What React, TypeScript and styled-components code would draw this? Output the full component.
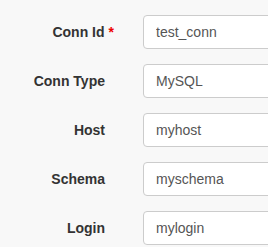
import styled, { createGlobalStyle } from "styled-components";

const GlobalStyle = createGlobalStyle`
  html, body {
    margin: 0;
    padding: 0;
    background: #f8f8f8;
    overflow: hidden;
  }
  body {
    font-family: "Liberation Sans", Arial, Helvetica, sans-serif;
    font-size: 14px;
    color: #333;
  }
`;

const Form = styled.form`
  display: flex;
  flex-direction: column;
  gap: 15px;
  padding-top: 15px;
`;

const Row = styled.div`
  display: grid;
  grid-template-columns: 105px 300px;
  column-gap: 38px;
  align-items: center;
`;

const Label = styled.label`
  text-align: right;
  font-weight: bold;
  font-size: 14px;
  color: #333;
  white-space: nowrap;
`;

const Required = styled.span`
  color: #e00;
  margin-left: 4px;
  margin-right: -9px;
`;

const Input = styled.input`
  box-sizing: border-box;
  height: 34px;
  width: 100%;
  padding: 6px 12px;
  font-family: inherit;
  font-size: 14px;
  color: #555;
  background: #fff;
  border: 1px solid #ccc;
  border-radius: 4px;
  outline: none;
`;

const fields = [
  { label: "Conn Id", value: "test_conn", required: true },
  { label: "Conn Type", value: "MySQL" },
  { label: "Host", value: "myhost" },
  { label: "Schema", value: "myschema" },
  { label: "Login", value: "mylogin" },
];

export default function App() {
  return (
    <>
      <GlobalStyle />
      <Form>
        {fields.map((f) => (
          <Row key={f.label}>
            <Label>
              {f.label}
              {f.required && <Required>*</Required>}
            </Label>
            <Input defaultValue={f.value} readOnly />
          </Row>
        ))}
      </Form>
    </>
  );
}
